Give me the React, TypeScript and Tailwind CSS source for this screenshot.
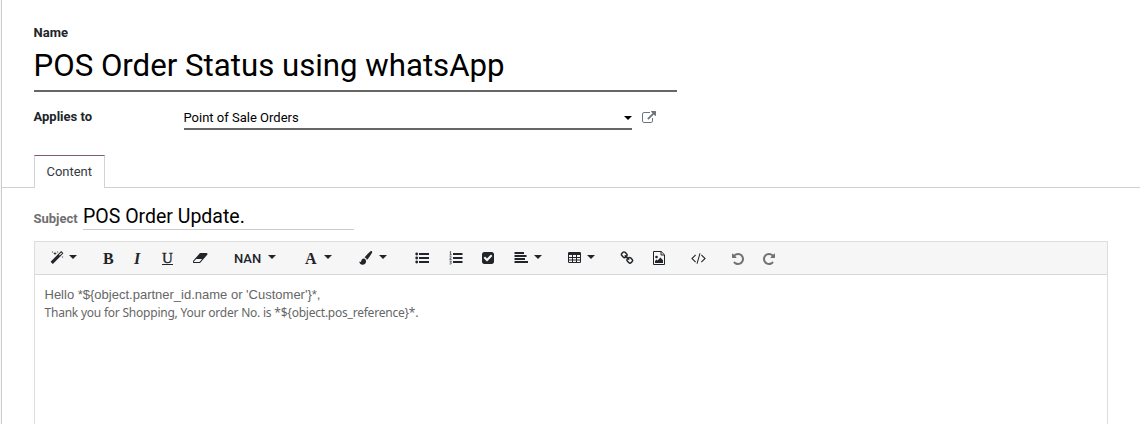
import type { ReactNode } from 'react';

const paths = {
  external:
    'M1408 928v320q0 119-84.5 203.5t-203.5 84.5h-832q-119 0-203.5-84.5t-84.5-203.5v-832q0-119 84.5-203.5t203.5-84.5h704q14 0 23 9t9 23v64q0 14-9 23t-23 9h-704q-66 0-113 47t-47 113v832q0 66 47 113t113 47h832q66 0 113-47t47-113v-320q0-14 9-23t23-9h64q14 0 23 9t9 23zm384-864v512q0 26-19 45t-45 19-45-19l-176-176-652 652q-10 10-23 10t-23-10l-114-114q-10-10-10-23t10-23l652-652-176-176q-19-19-19-45t19-45 45-19h512q26 0 45 19t19 45z',
  magic:
    'M1254 581l293-293-107-107-293 293zm447-293q0 27-18 45l-1286 1286q-18 18-45 18t-45-18l-198-198q-18-18-18-45t18-45l1286-1286q18-18 45-18t45 18l198 198q18 18 18 45zm-1351-190l98 30-98 30-30 98-30-98-98-30 98-30 30-98zm350 162l196 60-196 60-60 196-60-196-196-60 196-60 60-196zm930 478l98 30-98 30-30 98-30-98-98-30 98-30 30-98zm-640-640l98 30-98 30-30 98-30-98-98-30 98-30 30-98z',
  eraser:
    'M832 1408l336-384h-768l-336 384h768zm1013-1077q15 34 9.5 71.5t-30.5 65.5l-896 1024q-38 44-96 44h-768q-38 0-69.5-20.5t-47.5-54.5q-15-34-9.5-71.5t30.5-65.5l896-1024q38-44 96-44h768q38 0 69.5 20.5t47.5 54.5z',
  check:
    'M813 1299l614-614q19-19 19-45t-19-45l-102-102q-19-19-45-19t-45 19l-467 467-211-211q-19-19-45-19t-45 19l-102 102q-19 19-19 45t19 45l358 358q19 19 45 19t45-19zm851-883v960q0 119-84.5 203.5t-203.5 84.5h-960q-119 0-203.5-84.5t-84.5-203.5v-960q0-119 84.5-203.5t203.5-84.5h960q119 0 203.5 84.5t84.5 203.5z',
  link:
    'M1520 1216q0-40-28-68l-208-208q-28-28-68-28-42 0-72 32 3 3 19 18.5t21.5 21.5 15 19 13 25.5 3.5 27.5q0 40-28 68t-68 28q-15 0-27.5-3.5t-25.5-13-19-15-21.5-21.5-18.5-19q-33 31-33 73 0 40 28 68l206 207q27 27 68 27 40 0 68-26l147-146q28-28 28-67zm-703-705q0-40-28-68l-206-207q-28-28-68-28-39 0-68 27l-147 146q-28 28-28 67 0 40 28 68l208 208q27 27 68 27 42 0 72-31-3-3-19-18.5t-21.5-21.5-15-19-13-25.5-3.5-27.5q0-40 28-68t68-28q15 0 27.5 3.5t25.5 13 19 15 21.5 21.5 18.5 19q33-31 33-73zm895 705q0 120-85 203l-147 146q-83 83-203 83-121 0-204-85l-206-207q-83-83-83-203 0-123 88-209l-88-88q-86 88-208 88-120 0-204-84l-208-208q-84-84-84-204t85-203l147-146q83-83 203-83 121 0 204 85l206 207q83 83 83 203 0 123-88 209l88 88q86-88 208-88 120 0 204 84l208 208q84 84 84 204z',
  code:
    'M617 1399l-50 50q-10 10-23 10t-23-10l-466-466q-10-10-10-23t10-23l466-466q10-10 23-10t23 10l50 50q10 10 10 23t-10 23l-393 393 393 393q10 10 10 23t-10 23zm591-1067l-373 1291q-4 13-15.5 19.5t-23.5 2.5l-62-17q-13-4-19.5-15.5t-2.5-24.5l373-1291q4-13 15.5-19.5t23.5-2.5l62 17q13 4 19.5 15.5t2.5 24.5zm657 651l-466 466q-10 10-23 10t-23-10l-50-50q-10-10-10-23t10-23l393-393-393-393q-10-10-10-23t10-23l50-50q10-10 23-10t23 10l466 466q10 10 10 23t-10 23z',
  undo:
    'M1664 896q0 156-61 298t-164 245-245 164-298 61q-172 0-327-72.5t-264-204.5q-7-10-6.5-22.5t8.5-20.5l137-138q10-9 25-9 16 2 23 12 73 95 179 147t225 52q104 0 198.5-40.5t163.5-109.5 109.5-163.5 40.5-198.5-40.5-198.5-109.5-163.5-163.5-109.5-198.5-40.5q-98 0-188 35.5t-160 101.5l137 138q31 30 14 69-17 40-59 40h-448q-26 0-45-19t-19-45v-448q0-42 40-59 39-17 69 14l130 129q107-101 244.5-156.5t284.5-55.5q156 0 298 61t245 164 164 245 61 298z',
};

function Glyph({ d, className = 'w-3.5' }: { d: string; className?: string }) {
  return (
    <svg
      viewBox={d === paths.eraser || d === paths.code ? '0 0 1920 1792' : '0 0 1792 1792'}
      className={`h-3.5 shrink-0 ${className}`}
      fill="currentColor"
    >
      <path d={d} />
    </svg>
  );
}

function Drawing({ children }: { children: ReactNode }) {
  return (
    <svg viewBox="0 0 14 14" className="size-3.5 shrink-0" fill="currentColor">
      {children}
    </svg>
  );
}

function Caret() {
  return <span className="mb-0.5 h-0 w-0 shrink-0 border-x-4 border-t-4 border-x-transparent border-t-current" />;
}

function Tool({ className, children }: { className: string; children: ReactNode }) {
  return <button className={`flex h-full shrink-0 items-center justify-start ${className}`}>{children}</button>;
}

function Toolbar() {
  return (
    <div className="flex h-[33px] items-center border-b border-[#d8d8d8] bg-[#f6f6f6] pl-[15px] text-[#212529]">
      <Tool className="w-[53px] gap-[5px]"><Glyph d={paths.magic} /><Caret /></Tool>
      <Tool className="w-[31px] pt-px font-['Liberation_Serif',serif] text-base font-bold">B</Tool>
      <Tool className="w-[28px] pt-px font-['Liberation_Serif',serif] text-base font-bold italic">I</Tool>
      <Tool className="w-[31px] pt-px font-['Liberation_Serif',serif] text-[15px]"><span className="border-b border-current leading-[12px] [-webkit-text-stroke:0.35px]">U</span></Tool>
      <Tool className="w-[41px]"><Glyph d={paths.eraser} className="w-[15px]" /></Tool>
      <Tool className="w-[71px] gap-[7px] text-[13px] font-medium"><span className="pt-px">NAN</span><Caret /></Tool>
      <Tool className="w-[54px] gap-[7px]"><span className="pt-px font-['Liberation_Serif',serif] text-base font-bold">A</span><Caret /></Tool>
      <Tool className="w-[56px] gap-[6px]">
        <Drawing>
          <path d="M12.8.2c-.5-.4-1.1-.2-1.6.2C8.9 2.3 6.8 4.8 5.5 6.6c1.2.3 2.1 1.1 2.4 2.3 1.7-1.7 4-5 5.1-7.1.3-.7.3-1.2-.2-1.6ZM4.8 7.6c-1.6 0-2.2 1.1-2.6 2.6-.3.9-.8.9-1.9.3.1 1.8 1.2 3.3 3.3 3.3 2.3 0 3.7-1.6 3.4-3.8-.1-1.4-1-2.4-2.2-2.4Z" />
        </Drawing>
        <Caret />
      </Tool>
      <Tool className="w-[34px]">
        <Drawing>
          <path d="M4 2h10v2H4zm0 4h10v2H4zm0 4h10v2H4z" />
          <circle cx="1.7" cy="3" r="1.4" /><circle cx="1.7" cy="7" r="1.4" /><circle cx="1.7" cy="11" r="1.4" />
        </Drawing>
      </Tool>
      <Tool className="w-[32px]">
        <Drawing>
          <path d="M4 2h9.5v2H4zm0 4h9.5v2H4zm0 4h9.5v2H4z" />
          <path d="M.7 1.2 1.6.5v3.2M.5 3.8h2.2M.6 5.7c.9-.8 2-.2 1.5.6L.7 8.4h2M.6 10.2h1.8l-.9 1.1c1.6.1 1.2 2.2-1 1.6" fill="none" stroke="currentColor" strokeWidth=".7" />
        </Drawing>
      </Tool>
      <Tool className="w-[33px]"><Glyph d={paths.check} /></Tool>
      <Tool className="w-[54px] gap-[6px]">
        <Drawing><path d="M.5 1h9.5v2H.5zm0 3h12v2H.5zm0 3h10.500v2H.5zm0 3h13.500v2H.5z" /></Drawing>
        <Caret />
      </Tool>
      <Tool className="w-[52px] gap-[5px]">
        <Drawing>
          <path fillRule="evenodd" d="M1.2 1h10.6q1.2 0 1.2 1.2v8.6q0 1.2-1.2 1.2H1.2Q0 12 0 10.8V2.2Q0 1 1.2 1ZM1 4v2h3V4Zm4 0v2h3V4Zm4 0v2h3V4ZM1 7v1.5h3V7Zm4 0v1.5h3V7Zm4 0v1.5h3V7ZM1 9.5V11h3V9.5Zm4 0V11h3V9.5Zm4 0V11h3V9.5Z" />
        </Drawing>
        <Caret />
      </Tool>
      <Tool className="w-[33px]"><Glyph d={paths.link} /></Tool>
      <Tool className="w-[38px]">
        <Drawing>
          <path d="M.5.5h7.700l3.300 3.300v9.700H.5ZM8 .5V4h3.500" fill="none" stroke="currentColor" />
          <path d="M2 12v-2l1.600-1.500 1 1L7.400 6.600 10 9.200V12Z" /><circle cx="3.5" cy="6" r="1.3" />
        </Drawing>
      </Tool>
      <Tool className="w-[40px]"><Glyph d={paths.code} className="w-[15px]" /></Tool>
      <Tool className="w-[31px] pt-px text-[#6f7274]"><Glyph d={paths.undo} /></Tool>
      <Tool className="pt-px text-[#6f7274]"><Glyph d={paths.undo} className="w-3.5 -scale-x-100" /></Tool>
    </div>
  );
}

export default function App() {
  return (
    <div className="flex h-[424px] overflow-hidden bg-[#f8f8f8] pl-px font-[Roboto,sans-serif] text-[13px] text-[#212529]">
      <main className="flex w-full flex-col border-l border-[#cccccc] bg-white indent-[-0.5px]">
        <section className="flex flex-col pl-8">
          <label className="mt-[23px] h-5 font-bold leading-5">Name</label>
          <div className="h-[49px] w-[643px] border-b-2 border-[#666666] text-[31.2px] leading-[46px] text-black">POS Order Status using whatsApp</div>
          <div className="flex h-[38px]">
            <label className="mt-[15px] w-[150px] font-bold leading-5">Applies to</label>
            <div className="mt-4 flex h-[22px] w-[448px] justify-between border-b-2 border-[#666666] leading-5 text-black">
              Point of Sale Orders
              <span className="mt-2 flex h-1"><Caret /></span>
            </div>
            <span className="ml-[10px] mt-[19px] text-[#6c757d]"><Glyph d={paths.external} /></span>
          </div>
        </section>
        <div className="mt-[25px] flex h-[33px] shrink-0">
          <div className="w-8 border-b border-[#ced0d6]" />
          <div className="w-[71px] border-x border-t border-x-[#ced4da] border-t-[#7c5b76] text-center leading-8 text-[#343a40]">Content</div>
          <div className="grow border-b border-[#ced0d6]" />
        </div>
        <div className="flex h-[42px] shrink-0 pl-8">
          <label className="mt-[21px] w-[49px] font-bold leading-5 text-[#6f6f6f]">Subject</label>
          <div className="mt-[13px] h-[29px] w-[271px] border-b border-[#cccccc] indent-0 text-[19.5px] leading-8 text-black">POS Order Update.</div>
        </div>
        <section className="ml-8 mt-[11px] w-[1074px] grow border-x border-t border-[#dddddd]">
          <Toolbar />
          <div className="px-[9px] pt-[11px] indent-[0.5px] text-[#666666]">
            <p className="font-['Liberation_Sans',sans-serif] text-[13px] leading-[18px]">{"Hello *${object.partner_id.name or 'Customer'}*,"}</p>
            <p className="whitespace-nowrap font-['Noto_Sans',sans-serif] text-xs leading-[18px] tracking-[-0.225px]">{'Thank you for Shopping, Your order No. is *${object.pos_reference}*.'}</p>
          </div>
        </section>
      </main>
    </div>
  );
}
